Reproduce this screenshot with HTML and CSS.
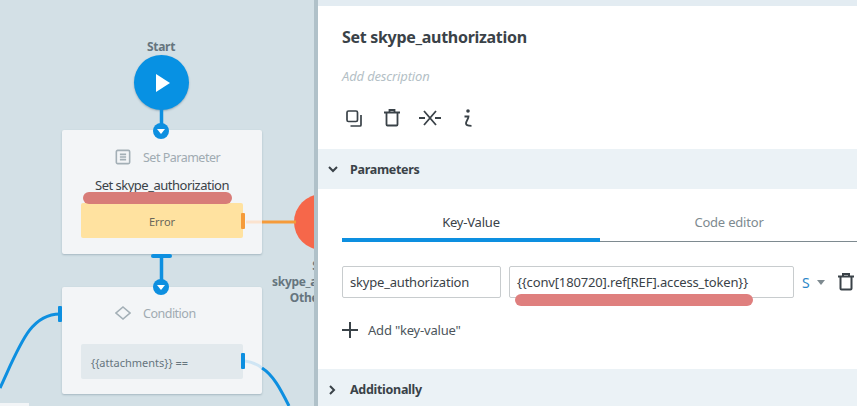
FILE: index.html

```html
<!DOCTYPE html>
<html lang="en">
<head>
  <meta charset="UTF-8">
  <title>Set skype_authorization</title>
  <link rel="stylesheet" href="styles.css">
</head>
<body>
  <div class="canvas">
    <svg class="wires" width="314" height="406" viewBox="0 0 314 406" fill="none">
      <path d="M161.500 108V124M161.500 258V280" stroke="#0d8fe0" stroke-width="3.500"/>
      <path d="M153 256H170" stroke="#0d8fe0" stroke-width="4" stroke-linecap="round"/>
      <path d="M246 222H262" stroke="#fbe3cf" stroke-width="3"/>
      <path d="M262 222H296" stroke="#f59b3a" stroke-width="3"/>
      <path d="M60 314C30 314 20 345 0 388" stroke="#0d8fe0" stroke-width="3"/>
      <path d="M245 361C252 362 257 364 262 368" stroke="#cfe5f4" stroke-width="3"/>
      <path d="M262 368C273 375 280 388 289 406" stroke="#0d8fe0" stroke-width="3"/>
    </svg>

    <div class="node-label start-label">Start</div>
    <div class="start-btn">
      <svg width="16" height="20" viewBox="0 0 16 20"><path d="M1 1L15 10L1 19Z" fill="#fff"/></svg>
    </div>

    <div class="card card-param">
      <div class="card-head">
        <svg width="16" height="16" viewBox="0 0 18 18" fill="none" stroke="#a3afb6" stroke-width="1.800">
          <rect x="1.500" y="1.500" width="15" height="15" rx="1.500"/>
          <path d="M5.500 6H12.500M5.500 9H12.500M5.500 12H12.500"/>
        </svg>
        <span>Set Parameter</span>
      </div>
      <div class="card-name">Set skype_authorization</div>
      <div class="card-row row-error">Error</div>
    </div>

    <div class="card card-cond">
      <div class="card-head">
        <svg width="16" height="16" viewBox="0 0 16 16" fill="none" stroke="#a3afb6" stroke-width="1.600">
          <path d="M8 2L15 8L8 14L1 8Z"/>
        </svg>
        <span>Condition</span>
      </div>
      <div class="card-row row-cond">{{attachments}} ==</div>
    </div>

    <div class="port port-start"><i></i></div>
    <div class="port port-cond"><i></i></div>
    <div class="handle handle-orange handle-error"></div>
    <div class="handle handle-left"></div>
    <div class="handle handle-right"></div>
    <div class="mark mark-node"></div>

    <div class="end-node"></div>
    <div class="node-label end-label">Set up<br>skype_authorization<br>Other request</div>
    <div class="corner-card"></div>
  </div>

  <div class="panel">
    <div class="panel-strip"></div>
    <div class="panel-top">
      <h1 class="panel-title">Set skype_authorization</h1>
      <div class="panel-desc">Add description</div>
      <div class="tools">
        <svg width="16" height="17" viewBox="0 0 16 17" fill="none" stroke="#3a4248" stroke-width="1.700">
          <rect x="1" y="1" width="10.500" height="10.500" rx="1.500"/>
          <path d="M15 5V15A1 1 0 0 1 14 16H4.500"/>
        </svg>
        <svg width="19" height="18" viewBox="-3 0 19 18" fill="none" stroke="#3a4248" stroke-width="1.800">
          <path d="M0 3.500H16M5.500 3.500V1H10.500V3.500M2.500 3.500V15.500A1 1 0 0 0 3.500 16.500H12.500A1 1 0 0 0 13.500 15.500V3.500"/>
        </svg>
        <svg width="22" height="16" viewBox="0 0 22 16" fill="none" stroke="#3a4248" stroke-width="1.800">
          <path d="M5 1L17 15M17 1L5 15M0 8H6M16 8H22"/>
        </svg>
        <svg width="12" height="18" viewBox="-4 0 12 18" fill="none" stroke="#3a4248" stroke-width="1.800">
          <circle cx="4" cy="2" r="1.800" fill="#3a4248" stroke="none"/>
          <path d="M0.500 7.500H4.500C4.500 10 2 12 2 14.500C2 16.500 3.500 16.800 7.500 16.800"/>
        </svg>
      </div>
    </div>

    <div class="section">
      <svg width="10" height="7" viewBox="0 0 10 7" fill="none" stroke="#3a4248" stroke-width="2"><path d="M1 1L5 5L9 1"/></svg>
      <span>Parameters</span>
    </div>

    <div class="params">
      <div class="tabs">
        <div class="tab tab-active">Key-Value</div>
        <div class="tab">Code editor</div>
      </div>
      <div class="kv-row">
        <div class="field field-key">skype_authorization</div>
        <div class="field field-value">{{conv[180720].ref[REF].access_token}}</div>
        <span class="kv-type">S</span>
        <span class="kv-caret"></span>
        <svg class="kv-del" width="16" height="18" viewBox="0 0 16 18" fill="none" stroke="#3a4248" stroke-width="2">
          <path d="M0 3.500H16M5 3.500V1H11V3.500M2.500 3.500V15.500A1 1 0 0 0 3.500 16.500H12.500A1 1 0 0 0 13.500 15.500V3.500"/>
        </svg>
        <div class="mark mark-value"></div>
      </div>
      <div class="add-row">
        <svg width="16" height="16" viewBox="0 0 16 16" stroke="#3a4248" stroke-width="2"><path d="M8 0V16M0 8H16"/></svg>
        <span>Add "key-value"</span>
      </div>
    </div>

    <div class="section section-closed">
      <svg width="7" height="10" viewBox="0 0 7 10" fill="none" stroke="#3a4248" stroke-width="2"><path d="M1 1L5 5L1 9"/></svg>
      <span>Additionally</span>
    </div>
  </div>
</body>
</html>
```

FILE: styles.css

```css
html, body {
  margin: 0;
  height: 100%;
  overflow: hidden;
}
body {
  display: flex;
  width: 857px;
  height: 406px;
  font-family: "Noto Sans", sans-serif;
  font-size: 13px;
  color: #3a4248;
}

/* diagram */
.canvas {
  position: relative;
  width: 314px;
  flex: none;
  overflow: hidden;
  background-color: #d3e0e6;
}
.wires {
  position: absolute;
  left: 0;
  top: 0;
  z-index: 2;
}
.node-label {
  position: absolute;
  font-size: 12px;
  font-weight: 700;
  line-height: 16px;
  color: #66757e;
  text-align: center;
  letter-spacing: -0.3px;
}
.start-label {
  left: 131px;
  top: 39px;
  width: 60px;
}
.start-btn {
  position: absolute;
  left: 134px;
  top: 55px;
  width: 55px;
  height: 55px;
  border-radius: 50%;
  background-color: #0791e3;
  box-shadow: 0 1px 2px rgba(60, 90, 110, 0.4);
  display: flex;
  align-items: center;
  justify-content: center;
  padding-left: 2px;
  box-sizing: border-box;
}
.card {
  position: absolute;
  left: 62px;
  width: 200px;
  box-sizing: border-box;
  padding: 17px 19px 0;
  background-color: #f3f5f7;
  border-radius: 2px;
  box-shadow: 0 1px 2px rgba(60, 90, 110, 0.3);
}
.card-param {
  top: 130px;
  height: 124px;
}
.card-cond {
  top: 287px;
  height: 107px;
  padding-top: 16px;
}
.card-head {
  display: flex;
  align-items: center;
  gap: 12px;
  height: 20px;
  padding-left: 34px;
  color: #a0abb2;
  font-size: 12.500px;
  letter-spacing: -0.5px;
}
.card-name {
  margin-top: 9px;
  margin-bottom: 9px;
  text-align: center;
  font-size: 13px;
  line-height: 18px;
  letter-spacing: -0.5px;
}
.card-row {
  height: 35px;
  line-height: 37px;
  border-radius: 2px;
  font-size: 11px;
}
.row-error {
  text-align: center;
  color: #6a665a;
  background-color: #ffe2a0;
}
.row-cond {
  margin-top: 21px;
  padding-left: 10px;
  color: #66757e;
  background-color: #e2e9ed;
}
.port {
  position: absolute;
  z-index: 3;
  left: 153px;
  width: 16px;
  height: 16px;
  border-radius: 50%;
  background-color: #0d8fe0;
  display: flex;
  align-items: center;
  justify-content: center;
}
.port i {
  border: 4px solid transparent;
  border-top: 5px solid #fff;
  border-bottom: 0;
}
.port-start {
  top: 123px;
}
.port-cond {
  top: 279px;
}
.handle {
  position: absolute;
  z-index: 3;
  width: 4px;
  height: 16px;
  border-radius: 1px;
  background-color: #0d8fe0;
}
.handle-orange {
  background-color: #f59b3a;
}
.handle-error {
  left: 241px;
  top: 213px;
}
.handle-left {
  left: 58px;
  top: 306px;
}
.handle-right {
  left: 241px;
  top: 353px;
}
.mark {
  position: absolute;
  z-index: 4;
  height: 12px;
  border-radius: 6px;
  background-color: #d87c78;
}
.mark-node {
  left: 83px;
  top: 192px;
  width: 149px;
}
.end-node {
  position: absolute;
  left: 294px;
  top: 194px;
  width: 56px;
  height: 56px;
  border-radius: 50%;
  background-color: #f6674a;
}
.end-label {
  left: 260px;
  top: 258px;
  width: 140px;
}
.corner-card {
  position: absolute;
  left: 0;
  top: 403px;
  width: 29px;
  height: 3px;
  background-color: #f3f5f7;
}

/* settings panel */
.panel {
  flex: 1;
  min-width: 0;
  border-left: 4px solid #b0c1c9;
  background-color: #fff;
  display: flex;
  flex-direction: column;
}
.panel-strip {
  height: 6px;
  background-color: #e3ecf2;
}
.panel-top {
  padding: 0 24px;
  height: 143px;
}
.panel-title {
  margin: 20px 0 0;
  font-size: 16px;
  line-height: 22px;
  font-weight: 700;
  letter-spacing: -0.3px;
}
.panel-desc {
  margin-top: 19px;
  font-size: 13px;
  line-height: 18px;
  font-style: italic;
  color: #b4bfc6;
  letter-spacing: -0.15px;
}
.tools {
  display: flex;
  align-items: center;
  gap: 19px;
  margin-top: 22px;
  height: 22px;
  padding-left: 4px;
}
.section {
  display: flex;
  align-items: center;
  gap: 12px;
  height: 40px;
  padding-left: 10px;
  background-color: #ebf2f6;
  font-size: 12.500px;
  font-weight: 700;
  letter-spacing: -0.3px;
}
.section-closed {
  flex: 1;
  gap: 14px;
  padding-left: 11px;
  padding-top: 4px;
}
.params {
  position: relative;
  height: 180px;
  padding-left: 24px;
  box-sizing: border-box;
}
.tabs {
  display: flex;
  height: 53px;
  margin-right: -10px;
  border-bottom: 1px solid #7e8a90;
  box-sizing: border-box;
}
.tab {
  width: 258px;
  padding-top: 23px;
  text-align: center;
  font-size: 13px;
  line-height: 20px;
  color: #7e8a90;
  letter-spacing: -0.2px;
}
.tab-active {
  height: 53px;
  box-sizing: border-box;
  border-bottom: 4px solid #0d8fe0;
  color: #3a4248;
}
.kv-row {
  position: relative;
  display: flex;
  align-items: center;
  margin-top: 24px;
  height: 32px;
}
.field {
  box-sizing: border-box;
  height: 32px;
  line-height: 30px;
  padding-left: 7px;
  border: 1px solid #c8ccce;
  border-radius: 2px;
  font-size: 13px;
  letter-spacing: -0.2px;
  white-space: nowrap;
}
.field-key {
  width: 159px;
  margin-right: 8px;
}
.field-value {
  width: 285px;
  letter-spacing: -0.15px;
}
.kv-type {
  margin-left: 8px;
  color: #2a86c8;
  font-size: 14px;
}
.kv-caret {
  margin-left: 7px;
  border: 4px solid transparent;
  border-top: 5px solid #7e8a90;
  border-bottom: 0;
}
.kv-del {
  margin-left: 13px;
  flex: none;
}
.mark-value {
  left: 173px;
  top: 28px;
  width: 238px;
  background-color: #df7f7e;
}
.add-row {
  display: flex;
  align-items: center;
  gap: 10px;
  margin-top: 24px;
  height: 16px;
  font-size: 13px;
  letter-spacing: -0.2px;
  color: #4c555b;
}
```
